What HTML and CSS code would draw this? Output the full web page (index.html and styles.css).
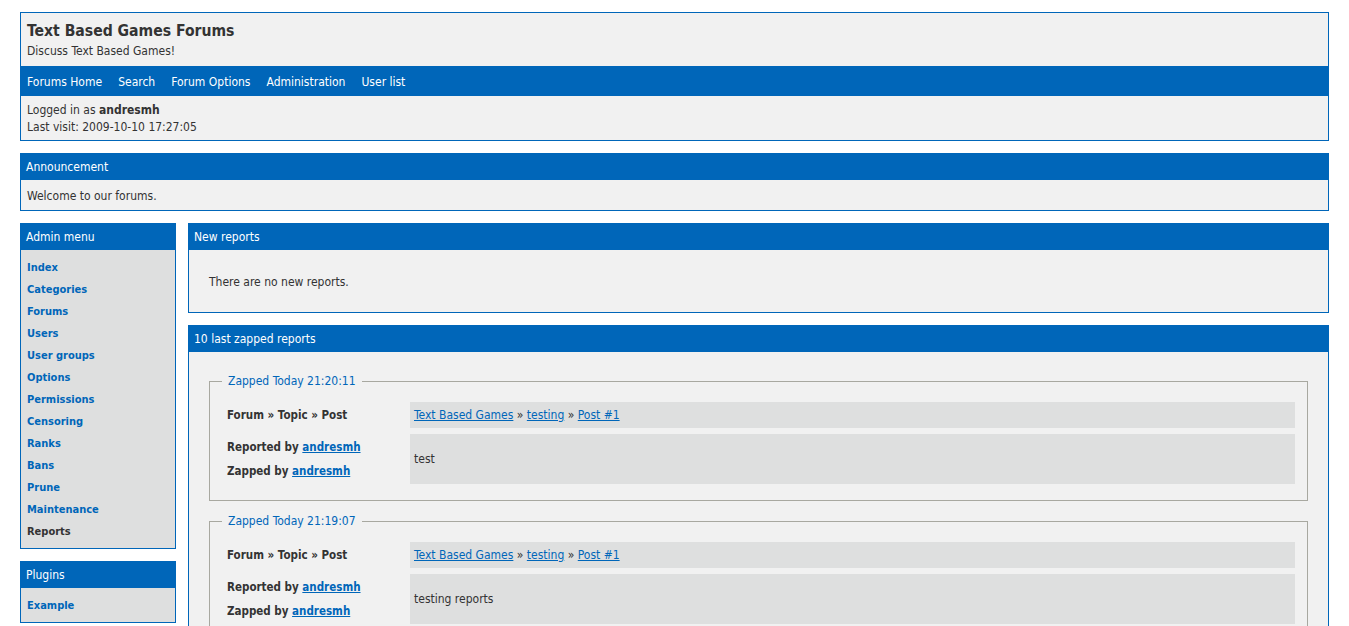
FILE: index.html
```html
<!DOCTYPE html>
<html lang="en">
<head>
<meta charset="utf-8">
<title>Text Based Games Forums / Admin / Reports</title>
<link rel="stylesheet" href="styles.css">
</head>
<body>
<div class="page">
  <div class="brdheader">
    <div class="title">
      <h1>Text Based Games Forums</h1>
      <p class="desc">Discuss Text Based Games!</p>
    </div>
    <ul class="nav">
      <li><a href="#">Forums Home</a></li>
      <li><a href="#">Search</a></li>
      <li><a href="#">Forum Options</a></li>
      <li><a href="#">Administration</a></li>
      <li><a href="#">User list</a></li>
    </ul>
    <div class="status">
      <p>Logged in as <strong>andresmh</strong></p>
      <p>Last visit: 2009-10-10 17:27:05</p>
    </div>
  </div>

  <div class="box announce">
    <h2 class="boxhead">Announcement</h2>
    <div class="announce-body">Welcome to our forums.</div>
  </div>

  <div class="main">
    <div class="side">
      <div class="box menu">
        <h2 class="boxhead">Admin menu</h2>
        <ul class="menu-list">
          <li><a href="#">Index</a></li>
          <li><a href="#">Categories</a></li>
          <li><a href="#">Forums</a></li>
          <li><a href="#">Users</a></li>
          <li><a href="#">User groups</a></li>
          <li><a href="#">Options</a></li>
          <li><a href="#">Permissions</a></li>
          <li><a href="#">Censoring</a></li>
          <li><a href="#">Ranks</a></li>
          <li><a href="#">Bans</a></li>
          <li><a href="#">Prune</a></li>
          <li><a href="#">Maintenance</a></li>
          <li class="current">Reports</li>
        </ul>
      </div>
      <div class="box menu">
        <h2 class="boxhead">Plugins</h2>
        <ul class="menu-list">
          <li><a href="#">Example</a></li>
        </ul>
      </div>
    </div>

    <div class="content">
      <div class="box">
        <h2 class="boxhead">New reports</h2>
        <div class="inform"><p>There are no new reports.</p></div>
      </div>

      <div class="box">
        <h2 class="boxhead">10 last zapped reports</h2>
        <div class="zapped">
          <fieldset class="report">
            <legend>Zapped Today 21:20:11</legend>
            <div class="report-grid">
              <div class="label single">Forum » Topic » Post</div>
              <div class="value single"><a href="#">Text Based Games</a> » <a href="#">testing</a> » <a href="#">Post #1</a></div>
              <div class="label multi"><span>Reported by <a href="#">andresmh</a></span><span>Zapped by <a href="#">andresmh</a></span></div>
              <div class="value msg">test</div>
            </div>
          </fieldset>
          <fieldset class="report">
            <legend>Zapped Today 21:19:07</legend>
            <div class="report-grid">
              <div class="label single">Forum » Topic » Post</div>
              <div class="value single"><a href="#">Text Based Games</a> » <a href="#">testing</a> » <a href="#">Post #1</a></div>
              <div class="label multi"><span>Reported by <a href="#">andresmh</a></span><span>Zapped by <a href="#">andresmh</a></span></div>
              <div class="value msg">testing reports</div>
            </div>
          </fieldset>
        </div>
      </div>
    </div>
  </div>
</div>
</body>
</html>
```

FILE: styles.css
```css
html, body {
  margin: 0;
  padding: 0;
  background: #ffffff;
}
body {
  font-family: "DejaVu Sans Condensed", "DejaVu Sans", Verdana, sans-serif;
  font-size: 12px;
  color: #333333;
}
.page {
  padding: 12px 20px 40px;
}
h1, h2, p, ul {
  margin: 0;
  padding: 0;
}
ul { list-style: none; }
a { color: #0066b9; }

.brdheader {
  border: 1px solid #0066b9;
  background: #f1f1f1;
}
.title {
  padding: 8px 6px 6px;
}
.title h1 {
  font-size: 15.6px;
  line-height: 20px;
  font-weight: bold;
  color: #333333;
}
.desc {
  line-height: 18px;
  margin-top: 1px;
}
.nav {
  display: flex;
  gap: 16px;
  background: #0066b9;
  height: 30px;
  box-sizing: border-box;
  align-items: center;
  padding: 2px 6px 0;
}
.nav a {
  color: #ffffff;
  text-decoration: none;
  font-size: 12px;
}
.status {
  padding: 6px 6px 4px;
  line-height: 17px;
}

.box {
  border: 1px solid #0066b9;
  background: #f1f1f1;
}
.boxhead {
  background: #0066b9;
  color: #ffffff;
  font-size: 12px;
  font-weight: normal;
  height: 27px;
  box-sizing: border-box;
  padding: 2px 6px 0;
  line-height: 25px;
  margin: -1px -1px 0;
}
.announce {
  margin-top: 12px;
}
.announce-body {
  padding: 8px 6px 5px;
  line-height: 17px;
}

.main {
  display: flex;
  gap: 12px;
  margin-top: 12px;
  align-items: flex-start;
}
.side {
  width: 156px;
  flex: none;
  display: flex;
  flex-direction: column;
  gap: 12px;
}
.menu {
  background: #dedfdf;
}
.menu-list {
  padding: 7px 6px 5px;
}
.menu-list li {
  font-size: 11px;
  line-height: 22px;
  font-weight: bold;
}
.menu-list a {
  text-decoration: none;
  color: #0066b9;
}
.menu-list .current {
  color: #333333;
}

.content {
  flex: 1;
  display: flex;
  flex-direction: column;
  gap: 12px;
  min-width: 0;
}
.inform {
  padding: 24px 20px 21px;
  line-height: 17px;
}
.zapped {
  padding: 1px 20px 20px;
}
.report {
  margin: 20px 0 0;
  border: 1px solid #a8a8a0;
  padding: 12px 12px 16px;
}
.report + .report {
  margin-top: 12px;
}
.report legend {
  color: #0066b9;
  padding: 0 6px;
  line-height: 17px;
}
.report-grid {
  display: grid;
  grid-template-columns: 188px 1fr;
  row-gap: 6px;
}
.label {
  padding-left: 5px;
  display: flex;
  flex-direction: column;
  justify-content: center;
  font-weight: bold;
  font-size: 11.5px;
}
.label.single {
  height: 26px;
}
.label.multi span {
  line-height: 24px;
}
.value {
  background: #dedfdf;
  padding: 0 4px;
  display: flex;
  align-items: center;
}
.value.single {
  height: 26px;
  white-space: pre;
}
.value.msg {
  height: 50px;
}
```
